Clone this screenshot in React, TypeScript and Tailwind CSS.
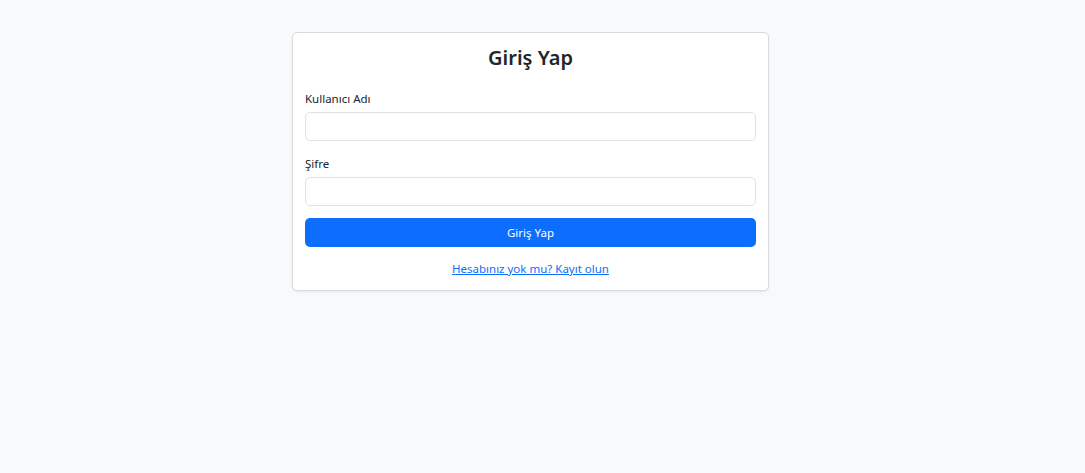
export default function App() {
  return (
    <div
      className="min-h-[473px] w-full bg-[#f8f9fa] pt-[32px]"
      style={{ fontFamily: '"Noto Sans", "Open Sans", sans-serif' }}
    >
      <div className="ml-[292px] w-[477px] rounded-[5px] border border-[#d9dadb] bg-white px-[12px] pt-[13px] pb-[12px] shadow-[0_1px_2px_rgba(0,0,0,0.075)]">
        <h2 className="mb-[19px] text-center text-[20px] leading-[24px] font-semibold text-[#212529]">
          Giriş Yap
        </h2>
        <div className="mb-[13px]">
          <label className="mb-[4px] block text-[11.5px] leading-[19px] text-[#212529]">
            Kullanıcı Adı
          </label>
          <input
            type="text"
            className="block h-[29px] w-full rounded-[5px] border border-[#dee2e6] bg-white px-[10px] text-[12px] outline-none"
          />
        </div>
        <div className="mb-[12px]">
          <label className="mb-[4px] block text-[11.5px] leading-[19px] text-[#212529]">
            Şifre
          </label>
          <input
            type="password"
            className="block h-[29px] w-full rounded-[5px] border border-[#dee2e6] bg-white px-[10px] text-[12px] outline-none"
          />
        </div>
        <button className="block h-[29px] w-full rounded-[5px] bg-[#0d6efd] text-[11.5px] text-white">
          Giriş Yap
        </button>
        <div className="mt-[12px] text-center text-[11.5px] leading-[19px]">
          <a href="#" className="text-[#0d6efd] underline">
            Hesabınız yok mu? Kayıt olun
          </a>
        </div>
      </div>
    </div>
  );
}
